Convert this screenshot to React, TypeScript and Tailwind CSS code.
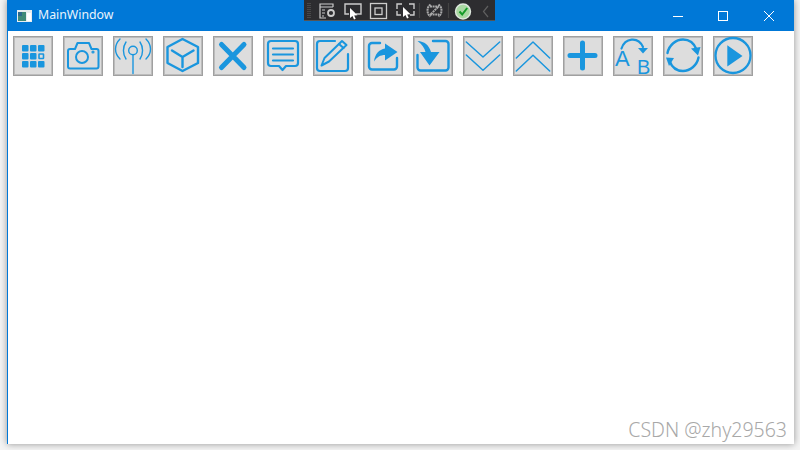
import React from "react";

const B = "#1a96de";

const Btn = ({ children }: { children: React.ReactNode }) => (
  <div className="w-10 h-10 shrink-0 border border-[#a0a0a0] bg-[#dddddd] flex items-center justify-center shadow-[inset_0_0_0_1px_#bcbcbc]">
    <svg width="40" height="40" viewBox="0 0 40 40" className="shrink-0" fill="none" stroke={B} strokeWidth="2" strokeLinecap="round" strokeLinejoin="round">
      {children}
    </svg>
  </div>
);

const grid = () => {
  const out: React.ReactNode[] = [];
  for (let r = 0; r < 3; r++)
    for (let c = 0; c < 3; c++) {
      const x = 9 + c * 8;
      const y = 9 + r * 8;
      if (r === 1 && c === 2) out.push(<rect key="k" x={x + 1} y={y + 1} width="4.5" height="4.5" rx="0.5" strokeWidth="1.6" />);
      else out.push(<rect key={`${r}${c}`} x={x} y={y} width="6.5" height="6.5" rx="1" fill={B} stroke="none" />);
    }
  return out;
};

export default function App() {
  return (
    <div className="w-[800px] h-[450px] bg-[#f4f4f4] overflow-hidden pl-[7px] pr-[6px] pb-[6px]" style={{ fontFamily: '"Noto Sans", "Open Sans", sans-serif' }}>
      <div className="relative w-full h-full bg-white border-l border-[#0078d7] flex flex-col shadow-[0_0_7px_rgba(0,0,0,0.4)]">
        <header className="h-[31px] shrink-0 bg-[#0078d7] flex items-center pl-[9px] text-white">
          <svg width="15" height="12" viewBox="0 0 15 12" className="mr-[6px]">
            <rect width="15" height="12" fill="#e8eef0" />
            <rect x="1" y="2" width="8" height="9" fill="#3f8a78" />
            <rect x="1" y="2" width="4" height="4" fill="#2c6a8c" />
            <rect x="10" y="3" width="4" height="8" fill="#ffffff" />
          </svg>
          <span className="text-[12.3px] leading-none text-[#eaf4fc]">MainWindow</span>
          <div className="ml-auto flex items-center h-full pr-[2px]">
            <div className="w-[44px] flex justify-center">
              <svg width="10" height="10" viewBox="0 0 10 10"><path d="M0 5.500H10" stroke="#fff" strokeWidth="1" /></svg>
            </div>
            <div className="w-[46px] flex justify-center">
              <svg width="10" height="10" viewBox="0 0 10 10"><rect x="0.500" y="0.500" width="9" height="9" fill="none" stroke="#fff" strokeWidth="1" /></svg>
            </div>
            <div className="w-[46px] flex justify-center">
              <svg width="10" height="10" viewBox="0 0 10 10"><path d="M0 0L10 10M10 0L0 10" stroke="#fff" strokeWidth="1" /></svg>
            </div>
          </div>
        </header>

        {/* WPF debug toolbar */}
        <div className="absolute left-[296px] top-0 w-[191px] h-[21px] bg-[#2d2d30] border-b border-[#555] flex items-center">
          <svg width="191" height="21" viewBox="0 0 191 21" fill="none" stroke="#cccccc" strokeWidth="1.2" className="shrink-0">
            <path d="M4 3v15M6 3v15" stroke="#5c5c5c" strokeDasharray="1 1" />
            <path d="M16 8V4h13v3M16 7h13M16 8v10h6M18 10h3M18 13h3M18 16h2" />
            <circle cx="27" cy="13" r="3" strokeWidth="1.800" />
            <path d="M45 14h-4V4h16v10h-5" strokeWidth="1.400" />
            <path d="M46 8v10l2.500-2 1.500 3.500 1.700-.8-1.500-3.200 3.300-.3z" fill="#fff" stroke="none" />
            <rect x="66.500" y="3.500" width="16" height="15" strokeWidth="1.300" />
            <rect x="71" y="8" width="7" height="6.500" strokeWidth="1.300" />
            <path d="M93 9V4h5M110 9V4h-5M93 11v4h4M110 11v4h-4" strokeWidth="1.400" />
            <path d="M99 7v10l2.500-2 1.500 3.500 1.700-.8-1.500-3.200 3.300-.3z" fill="#fff" stroke="none" />
            <path d="M115.500 3v15M144.500 3v15" stroke="#444" />
            <path d="M126.500 4.500c-4 2.500-4 9.500 0 12M134.500 4.500c4 2.500 4 9.500 0 12M126 6.500h9M126 14.500h9M127 14l7-7" stroke="#a8a8a8" strokeWidth="2" strokeDasharray="2 .6" />
            <circle cx="159" cy="11.500" r="7.500" fill="#a9d8a2" stroke="#dfe8df" strokeWidth="1.400" />
            <path d="M155.500 11.500l2.700 3 5-6.500" stroke="#149a28" strokeWidth="2" />
            <path d="M184 6l-4.500 5.500 4.500 5.500" stroke="#5f5f5f" />
          </svg>
        </div>

        <div className="flex gap-[10px] pl-[5px] pt-[5px]">
          <Btn>{grid()}</Btn>
          <Btn>
            <path d="M5 15a2 2 0 0 1 2-2h5l2.500-6h11.500l2.500 6h5a2 2 0 0 1 2 2v15.500a2 2 0 0 1-2 2H7a2 2 0 0 1-2-2z" />
            <circle cx="19" cy="21" r="6" />
            <circle cx="30" cy="16" r="0.600" fill={B} />
          </Btn>
          <Btn>
            <g strokeWidth="1.400">
              <circle cx="20" cy="14.500" r="4.300" />
              <path d="M20 19V37.500" />
              <path d="M13 6c-3.400 5-3.400 12 0 17M27 6c3.400 5 3.400 12 0 17" />
              <path d="M7 3c-6 6-6 14 0 20M33 3c6 6 6 14 0 20" />
            </g>
          </Btn>
          <Btn>
            <g strokeWidth="2.400">
              <path d="M19.500 3L35 11V27L19.500 35 4.500 27V11z" />
              <path d="M9 14.500l10.500 6.500 11-6.500M19.500 21V31" />
            </g>
          </Btn>
          <Btn>
            <path d="M8.500 8.500L31 31.500M31 8.500L8.500 31.500" strokeWidth="5" />
          </Btn>
          <Btn>
            <path d="M8 5h24a3 3 0 0 1 3 3v19a3 3 0 0 1-3 3h-9l-3.500 4-3.500-4H8a3 3 0 0 1-3-3V8a3 3 0 0 1 3-3z" strokeWidth="2.200" />
            <path d="M10 12.500h20M10 18.500h20M10 24.500h20" strokeWidth="2.200" />
          </Btn>
          <Btn>
            <path d="M22 5H7a3 3 0 0 0-3 3v24a3 3 0 0 0 3 3h25a3 3 0 0 0 3-3V18" strokeWidth="2.200" />
            <path d="M29 5l4.500 4L16 25.500l-7.500 4 3-7.500z" strokeWidth="2" />
            <path d="M26 8l4.500 4" />
          </Btn>
          <Btn>
            <path d="M17 7H9a3 3 0 0 0-3 3v20.500a3 3 0 0 0 3 3h22a3 3 0 0 0 3-3V22" strokeWidth="2.400" />
            <path d="M22 7.500L34.500 16 22 24.500v-5.500c-4.500 0-8 2-11 6.500 1-7.500 5-12 11-13z" fill={B} stroke="none" />
          </Btn>
          <Btn>
            <path d="M20 5h12.500a3 3 0 0 1 3 3v23.500a3 3 0 0 1-3 3H7.500a3 3 0 0 1-3-3V19" strokeWidth="2.400" />
            <path d="M4.500 5c7 .5 11.500 4 13.500 11h8.500L16.500 29.500 7 16h5.500C11.500 12 9 8 4.500 5z" fill={B} stroke="none" />
          </Btn>
          <Btn>
            <g strokeWidth="1.500">
              <path d="M3.300 6L20 21 36.700 6" />
              <path d="M3.300 19L20 34.300 36.700 19" />
            </g>
          </Btn>
          <Btn>
            <g strokeWidth="1.500">
              <path d="M3.300 22L20 6 36.700 22" />
              <path d="M3.300 35L20 19.300 36.700 35" />
            </g>
          </Btn>
          <Btn>
            <path d="M19.500 7V32M7 19.500H32" strokeWidth="5" />
          </Btn>
          <Btn>
            <text x="2" y="30" fontFamily='"Liberation Sans", sans-serif' fontSize="22" fill={B} stroke="none">A</text>
            <text x="24" y="37.500" fontFamily='"Liberation Sans", sans-serif' fontSize="20" fill={B} stroke="none">B</text>
            <path d="M8.500 12.500C12 2 25 0 30 11" strokeWidth="2.200" />
            <path d="M25 12h10l-5 5.500z" fill={B} stroke="none" />
          </Btn>
          <Btn>
            <path d="M4.500 17C6 9 13 3.500 20 3.500c6 0 11 3.500 13.500 10" strokeWidth="2.400" />
            <path d="M35.500 21.500C34 29.500 27 35 20 35c-6 0-11-3.500-13.500-10" strokeWidth="2.400" />
            <path d="M28 12.500l9.500-1.500-2.500 8.500z" fill={B} stroke="none" />
            <path d="M3 21.500l8 .5-5 8z" fill={B} stroke="none" />
          </Btn>
          <Btn>
            <circle cx="20" cy="19.500" r="17.500" strokeWidth="2.300" />
            <path d="M14.300 9.300L29.500 20 14.300 30.500z" fill={B} stroke="none" />
          </Btn>
        </div>

        <div className="absolute right-[7px] bottom-[5px] text-[19.5px] leading-none font-light text-[#a8a8a8]">CSDN @zhy29563</div>
      </div>
    </div>
  );
}
